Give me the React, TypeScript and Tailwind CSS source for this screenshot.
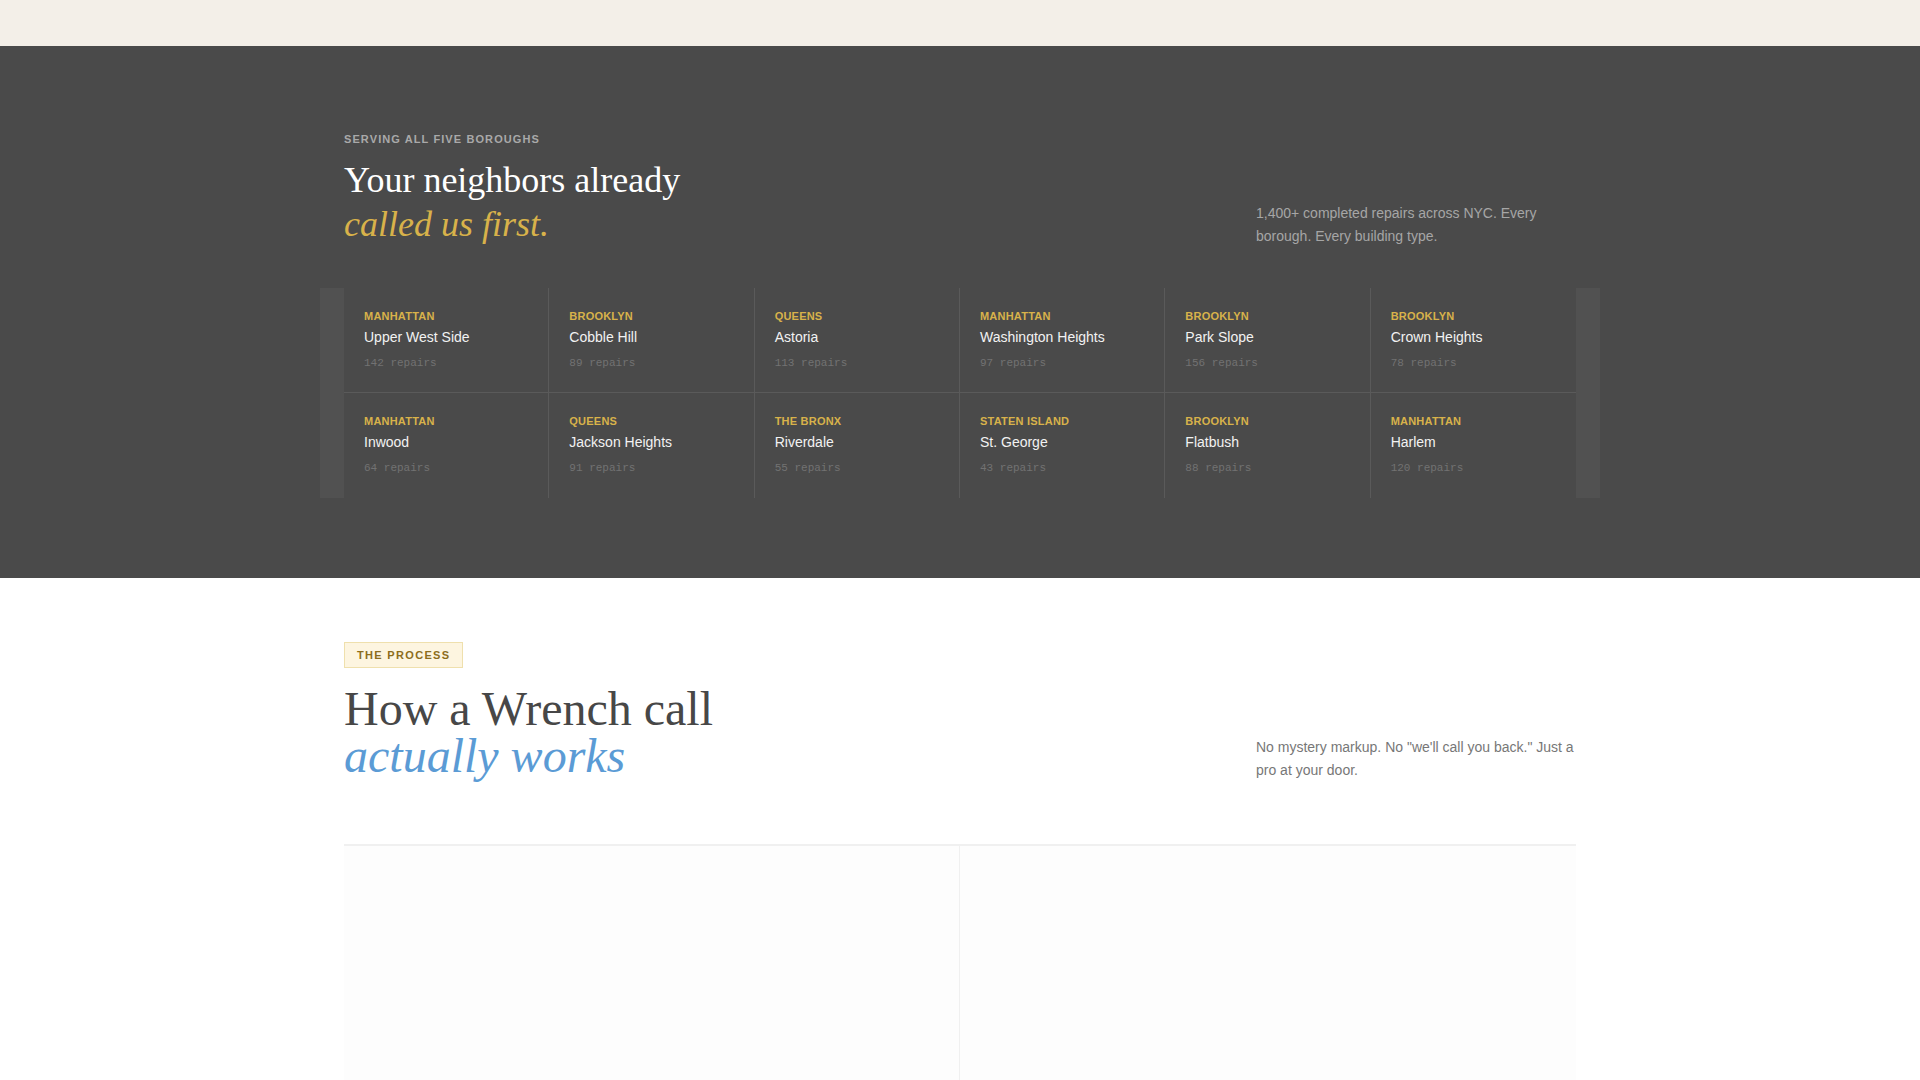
const areas = [
  { borough: "Manhattan", name: "Upper West Side", repairs: 142 },
  { borough: "Brooklyn", name: "Cobble Hill", repairs: 89 },
  { borough: "Queens", name: "Astoria", repairs: 113 },
  { borough: "Manhattan", name: "Washington Heights", repairs: 97 },
  { borough: "Brooklyn", name: "Park Slope", repairs: 156 },
  { borough: "Brooklyn", name: "Crown Heights", repairs: 78 },
  { borough: "Manhattan", name: "Inwood", repairs: 64 },
  { borough: "Queens", name: "Jackson Heights", repairs: 91 },
  { borough: "The Bronx", name: "Riverdale", repairs: 55 },
  { borough: "Staten Island", name: "St. George", repairs: 43 },
  { borough: "Brooklyn", name: "Flatbush", repairs: 88 },
  { borough: "Manhattan", name: "Harlem", repairs: 120 },
];

function AreaCell({ area, index }: { area: (typeof areas)[number]; index: number }) {
  const lastCol = index % 6 === 5;
  const topRow = index < 6;
  return (
    <div
      className={
        "px-5 pt-5 h-[105px] border-[#5a5a5a] " +
        (lastCol ? "" : "border-r ") +
        (topRow ? "border-b" : "")
      }
    >
      <div className="text-[11px] leading-4 font-bold uppercase tracking-[0.02em] text-[#d8b24a]">
        {area.borough}
      </div>
      <div className="mt-[2px] text-[14px] leading-[22px] text-[#f2f2f2]">{area.name}</div>
      <div className="mt-[7px] font-['Liberation_Mono',monospace] text-[11px] leading-4 text-[#727272]">
        {area.repairs} repairs
      </div>
    </div>
  );
}

export default function App() {
  return (
    <main className="min-h-screen bg-white font-['Liberation_Sans',Arial,sans-serif]">
      <div className="h-[46px] bg-[#f3efe8]" />

      {/* neighborhoods */}
      <section className="bg-[#4a4a4a] pt-[85px] pb-20">
        <div className="max-w-[1280px] mx-auto px-6 flex items-end justify-between">
          <div>
            <div className="text-[11px] leading-4 font-bold uppercase tracking-[0.1em] text-[#a9a9a9]">
              Serving all five boroughs
            </div>
            <h2 className="mt-[11px] font-['Liberation_Serif',serif] text-[36px] leading-[44px] text-white font-normal">
              Your neighbors already
              <br />
              <em className="text-[#d8b24a]">called us first.</em>
            </h2>
          </div>
          <p className="w-[320px] text-[14px] leading-[23px] text-[#a6a6a6] -mb-[2px]">
            1,400+ completed repairs across NYC. Every borough. Every building type.
          </p>
        </div>

        <div className="max-w-[1280px] mx-auto mt-[42px] flex">
          <div className="w-6 bg-[#515151]" />
          <div className="flex-1 grid grid-cols-6">
            {areas.map((a, i) => (
              <AreaCell key={a.name} area={a} index={i} />
            ))}
          </div>
          <div className="w-6 bg-[#515151]" />
        </div>
      </section>

      {/* process */}
      <section className="pt-16">
        <div className="max-w-[1280px] mx-auto px-6">
          <div className="flex items-end justify-between">
            <div>
              <span className="inline-block h-[26px] px-3 leading-[24px] border border-[#efe0ad] bg-[#fdf5e0] text-[11px] font-bold uppercase tracking-[0.12em] text-[#8c6d1c]">
                The Process
              </span>
              <h2 className="mt-[17px] font-['Liberation_Serif',serif] text-[48px] leading-[47px] text-[#474747] font-normal">
                How a Wrench call
                <br />
                <em className="text-[#5b9bd5]">actually works</em>
              </h2>
            </div>
            <p className="w-[320px] text-[14px] leading-[23px] text-[#777777] -mb-[3px]">
              No mystery markup. No "we'll call you back." Just a pro at your door.
            </p>
          </div>

          <div className="mt-[65px] grid grid-cols-2 border-t-2 border-[#f0f0f0]">
            <div className="h-[240px] border-r border-[#f0f0f0] bg-[#fdfdfd]" />
            <div className="h-[240px] bg-[#fdfdfd]" />
          </div>
        </div>
      </section>
    </main>
  );
}
